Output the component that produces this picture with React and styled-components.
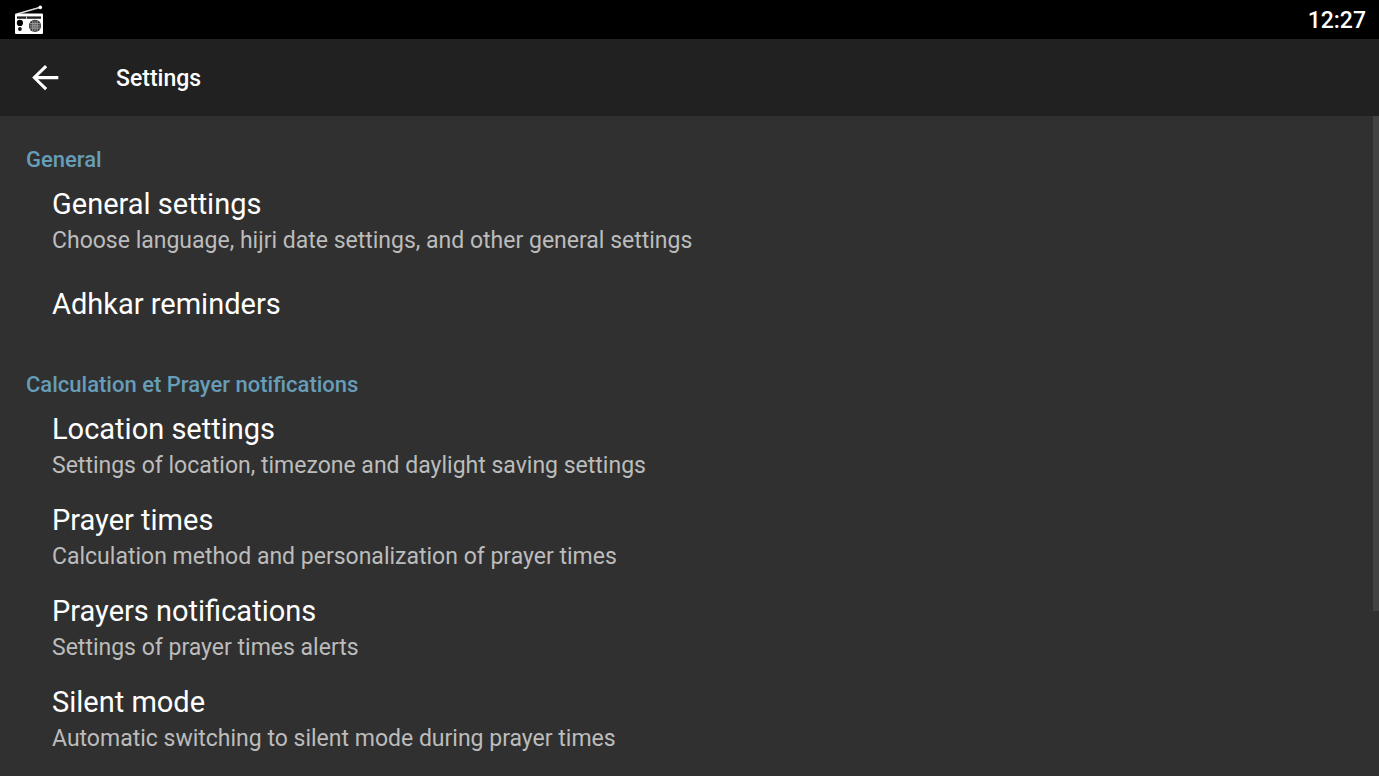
import React from "react";
import styled, { createGlobalStyle } from "styled-components";

const GlobalStyle = createGlobalStyle`
  * {
    box-sizing: border-box;
  }
  body {
    margin: 0;
    background: #303030;
    color: #fff;
    font-family: Roboto, "Liberation Sans", sans-serif;
  }
`;

const Screen = styled.div`
  height: 100vh;
  display: flex;
  flex-direction: column;
  overflow: hidden;
`;

const StatusBar = styled.div`
  flex: none;
  height: 39px;
  padding: 0 13px 0 14px;
  display: flex;
  align-items: center;
  justify-content: space-between;
  background: #000;
  time {
    padding-top: 2px;
    font-size: 23px;
    font-weight: 500;
  }
`;

const AppBar = styled.header`
  flex: none;
  height: 77px;
  padding: 0 26px;
  display: flex;
  align-items: center;
  gap: 52px;
  background: #212121;
  h1 {
    margin: 0;
    padding-top: 2px;
    font-size: 23px;
    font-weight: 500;
  }
`;

const BackButton = styled.button`
  width: 38px;
  height: 38px;
  padding: 0;
  border: 0;
  background: none;
  color: #fff;
  svg {
    display: block;
  }
`;

const Body = styled.div`
  flex: 1;
  min-height: 0;
  display: flex;
`;

const List = styled.main`
  flex: 1;
  overflow: hidden;
`;

const Scrollbar = styled.div`
  width: 6px;
  height: 75%;
  background: #434343;
`;

const Section = styled.section`
  padding: 27px 26px 0;
  h2 {
    margin: 0;
    font-size: 22px;
    line-height: 34px;
    font-weight: 500;
    color: #669db8;
  }
`;

const Row = styled.a`
  min-height: 73px;
  padding: 8px 26px 9px;
  display: flex;
  flex-direction: column;
  justify-content: center;
  color: #fff;
  text-decoration: none;
  strong {
    font-size: 29px;
    line-height: 38px;
    font-weight: 400;
  }
  span {
    font-size: 23px;
    line-height: 36px;
    color: #bcbcbc;
  }
`;

const sections = [
  {
    title: "General",
    items: [
      {
        title: "General settings",
        summary:
          "Choose language, hijri date settings, and other general settings",
      },
      { title: "Adhkar reminders" },
    ],
  },
  {
    title: "Calculation et Prayer notifications",
    items: [
      {
        title: "Location settings",
        summary: "Settings of location, timezone and daylight saving settings",
      },
      {
        title: "Prayer times",
        summary: "Calculation method and personalization of prayer times",
      },
      {
        title: "Prayers notifications",
        summary: "Settings of prayer times alerts",
      },
      {
        title: "Silent mode",
        summary: "Automatic switching to silent mode during prayer times",
      },
    ],
  },
];

const RadioIcon = () => (
  <svg width="30" height="30" viewBox="0 0 30 30" aria-hidden="true">
    <path d="M3 9 L25.5 2.5" stroke="#ddd" strokeWidth="1.6" />
    <circle cx="26.3" cy="2.4" r="1.8" fill="#fff" />
    <rect x="1" y="8.5" width="28" height="20.5" rx="1" fill="#fff" />
    <path d="M3 12.6h24" stroke="#222" strokeWidth="2.4" />
    <path d="M12.5 11.4v2.4" stroke="#ccc" />
    <circle cx="5.9" cy="17.9" r="3.1" fill="#000" />
    <circle cx="5.9" cy="24" r="1.9" fill="#111" />
    <circle cx="21" cy="20.9" r="6.1" fill="#333" />
    <path
      d="M16 18.7h10M15.5 20.9h11M16 23.1h10M18.8 16v10M21 15.5v11M23.2 16v10"
      stroke="#aaa"
      strokeWidth="0.9"
    />
  </svg>
);

const App = () => {
  return (
    <Screen>
      <GlobalStyle />
      <StatusBar>
        <RadioIcon />
        <time>12:27</time>
      </StatusBar>
      <AppBar>
        <BackButton aria-label="Back">
          <svg width="38" height="38" viewBox="0 0 24 24" fill="currentColor">
            <path d="M20.4 10.7H7.6l5.8-5.5L12 3.8l-8.1 7.9 8.1 8 1.4-1.4-5.8-5.5h12.8v-2.1z" />
          </svg>
        </BackButton>
        <h1>Settings</h1>
      </AppBar>
      <Body>
        <List>
          {sections.map((section) => (
            <Section key={section.title}>
              <h2>{section.title}</h2>
              {section.items.map((item) => (
                <Row key={item.title} href="#">
                  <strong>{item.title}</strong>
                  {item.summary && <span>{item.summary}</span>}
                </Row>
              ))}
            </Section>
          ))}
        </List>
        <Scrollbar />
      </Body>
    </Screen>
  );
};

export default App;
